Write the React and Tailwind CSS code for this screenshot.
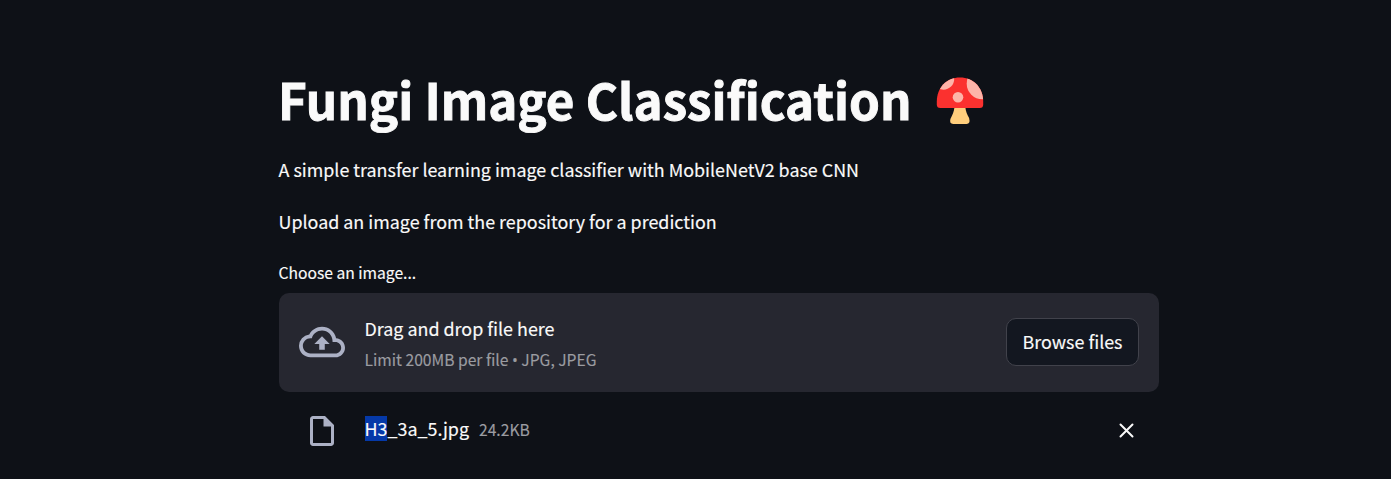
function Mushroom() {
  return (
    <svg width="48" height="48" viewBox="0 0 48 48" className="ml-[24px] mt-[10px] shrink-0">
      <defs>
        <clipPath id="cap">
          <path d="M24 0.5C10.5 0.5 0.8 10.8 0.8 24.5V27.5Q0.8 31 4.3 31H43.7Q47.2 31 47.2 27.5V24.5C47.2 10.8 37.5 0.5 24 0.5Z" />
        </clipPath>
      </defs>
      <path d="M18.5 30H29.3C29.8 34.5 31.2 37.5 33.1 41Q34.6 46.8 30.6 47H17.2Q13.2 46.8 14.4 42C16.5 38 18 34.5 18.5 30Z" fill="#ffce7c" />
      <g clipPath="url(#cap)">
        <rect width="48" height="32" fill="#fb312f" />
        <circle cx="7.5" cy="2" r="10.7" fill="#fdb4a9" />
        <circle cx="46.5" cy="6.5" r="15.8" fill="#fdb4a9" />
      </g>
      <circle cx="22" cy="20.3" r="5.3" fill="#fdb4a9" />
    </svg>
  );
}

export default function App() {
  return (
    <main className="h-[479px] overflow-hidden bg-[#0e1117] pl-[279px] pt-[67px] font-['Noto_Sans_CJK_SC','Noto_Sans',sans-serif] text-[#fafafa] [-webkit-text-stroke:0.15px_currentColor]">
      <div className="w-[880px]">
        <header className="flex h-[66px] items-start">
          <h1 className="-ml-px whitespace-nowrap text-[49.3px] font-bold leading-[64px] [-webkit-text-stroke:0.9px_#fafafa]">Fungi Image Classification</h1>
          <Mushroom />
        </header>
        <p className="-ml-[0.5px] mt-5 h-8 text-[17.9px] leading-8">A simple transfer learning image classifier with MobileNetV2 base CNN</p>
        <p className="-ml-[0.5px] mt-5 h-8 text-[17.9px] leading-8">Upload an image from the repository for a prediction</p>
        <p className="-ml-[0.5px] mt-[22px] h-7 text-[15.65px] leading-7">Choose an image...</p>
        <section className="mt-[6px] flex h-[99px] items-center rounded-[10px] bg-[#262730] px-5 pb-px">
          <svg width="46" height="46" viewBox="0 0 24 24" fill="#acb1c5" className="shrink-0">
            <path d="M19.35 10.04A7.49 7.49 0 0012 4C9.11 4 6.6 5.64 5.35 8.04A5.994 5.994 0 000 14c0 3.31 2.69 6 6 6h13c2.76 0 5-2.24 5-5 0-2.64-2.05-4.78-4.65-4.96zM19 18H6c-2.21 0-4-1.79-4-4s1.79-4 4-4h.71C7.37 7.69 9.48 6 12 6c3.04 0 5.5 2.46 5.5 5.5v.5H19c1.66 0 3 1.34 3 3s-1.34 3-3 3zM8 13h2.55v3h2.9v-3H16l-4-4-4 4z" />
          </svg>
          <div className="ml-[19.5px] flex-1">
            <div className="h-8 text-[17.9px] leading-8">Drag and drop file here</div>
            <div className="h-7 text-[15.65px] leading-8 text-[#9b9ca1]">Limit 200MB per file <span className="font-['Open_Sans',sans-serif] leading-none">•</span> JPG, JPEG</div>
          </div>
          <button className="flex h-12 w-[133px] items-center justify-center rounded-[10px] border border-[#41424b] bg-[#131720] pb-[2px] text-[17.9px]">Browse files</button>
        </section>
        <div className="mt-[21px] flex h-9 items-center pl-[25px] pr-5">
          <svg width="36" height="36" viewBox="0 0 24 24" fill="#acb1c5" className="shrink-0">
            <path d="M14 2H6c-1.1 0-1.99.9-1.99 2L4 20c0 1.1.89 2 1.99 2H18c1.1 0 2-.9 2-2V8l-6-6zM6 20V4h7v5h5v11H6z" />
          </svg>
          <div className="mb-1 ml-[24.5px] flex flex-1 items-center">
            <span className="flex h-[26px] text-[17.9px] leading-[25px]"><span className="h-[25px] bg-[#0539a8]">H3</span>_3a_5.jpg</span>
            <span className="ml-[10px] h-7 text-[15.65px] leading-[30px] text-[#9b9ca1]">24.2KB</span>
          </div>
          <svg width="25" height="25" viewBox="0 0 25 25" stroke="#fafafa" strokeWidth="2" strokeLinecap="round" className="mb-[2px] shrink-0">
            <path d="M6.5 6.5l12 12M18.5 6.5l-12 12" />
          </svg>
        </div>
      </div>
    </main>
  );
}
